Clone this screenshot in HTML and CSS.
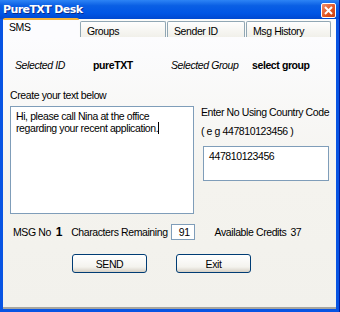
FILE: index.html
```html
<!DOCTYPE html>
<html lang="en">
<head>
  <meta charset="UTF-8">
  <title>PureTXT Desk</title>
  <link rel="stylesheet" href="styles.css">
</head>
<body>
  <div class="window">
    <div class="titlebar">
      <span class="title">PureTXT Desk</span>
      <span class="close-btn">
        <svg width="9" height="9" viewBox="0 0 9 9">
          <path d="M1 1 L8 8 M8 1 L1 8" stroke="#fff" stroke-width="2"/>
        </svg>
      </span>
    </div>
    <div class="client">
      <div class="tabs">
        <div class="tab active">SMS</div>
        <div class="tab">Groups</div>
        <div class="tab">Sender ID</div>
        <div class="tab">Msg History</div>
      </div>
      <div class="panel">
        <div class="selected-row">
          <span class="label-it id-label">Selected ID</span>
          <span class="bold id-value">pureTXT</span>
          <span class="label-it group-label">Selected Group</span>
          <span class="bold">select group</span>
        </div>
        <div class="create-label">Create your text below</div>
        <div class="compose">
          <div class="message-box">Hi, please call Nina at the office regarding your recent application.<span class="caret"></span></div>
          <div class="number-side">
            <div class="hint">Enter No Using Country Code</div>
            <div class="hint eg">( e g 447810123456 )</div>
            <div class="number-box">447810123456</div>
          </div>
        </div>
        <div class="stats-row">
          <span>MSG No</span>
          <span class="bold msg-no">1</span>
          <span class="chars">Characters Remaining</span>
          <span class="remain-box">91</span>
          <span class="credits">Available Credits</span>
          <span>37</span>
        </div>
        <div class="buttons">
          <button class="btn">SEND</button>
          <button class="btn">Exit</button>
        </div>
      </div>
    </div>
  </div>
</body>
</html>
```

FILE: styles.css
```css
body {
  margin: 0;
  padding: 0;
  font-family: 'Liberation Sans', Arial, sans-serif;
  font-size: 10.5px;
  letter-spacing: -0.4px;
  color: #000;
}

.window {
  width: 340px;
  height: 312px;
  box-sizing: border-box;
  display: flex;
  flex-direction: column;
  background: #0854e3;
  border-right: 1px solid #001ea0;
}

.titlebar {
  height: 19px;
  display: flex;
  align-items: center;
  justify-content: space-between;
  padding: 0 3px 0 3px;
  background: linear-gradient(#2d84f5, #0a5fe4 30%, #0055e5 70%, #0048d0);
}

.title {
  color: #fff;
  font-family: 'DejaVu Sans', sans-serif;
  font-weight: bold;
  font-size: 11px;
  letter-spacing: -0.6px;
  text-shadow: 1px 1px 0 #0a2b8c;
}

.close-btn {
  width: 13px;
  height: 13px;
  margin-top: 2px;
  border: 1px solid #fff;
  border-radius: 2px;
  background: linear-gradient(135deg, #f08f6e, #e0531f 60%, #c8400f);
  display: flex;
  align-items: center;
  justify-content: center;
}

.client {
  flex: 1;
  margin: 0 3px 3px 3px;
  display: flex;
  flex-direction: column;
  background: #fafaf8;
}

.tabs {
  display: flex;
  align-items: flex-end;
  height: 18px;
  background: #fbfbfa;
}

.tab {
  height: 16px;
  box-sizing: border-box;
  padding: 3px 0 0 6px;
  border: 1px solid #91a7b4;
  border-bottom: none;
  border-radius: 2px 2px 0 0;
  background: linear-gradient(#fefefe, #f1f0ea);
  margin-right: 1px;
}

.tab:nth-child(2) { width: 86px; }
.tab:nth-child(3) { width: 78px; }
.tab:nth-child(4) { width: 85px; }

.tab.active {
  width: 76px;
  height: 19px;
  padding: 1px 0 0 6px;
  background: #fcfcfe;
  border: none;
  border-top: 2px solid #f4b33c;
}

.panel {
  flex: 1;
  background: linear-gradient(#fcfcfe, #f4f3ee 55%, #f2f1ec);
  border-bottom: 2px solid #a7a6a0;
}

.selected-row {
  display: flex;
  align-items: baseline;
  padding: 22px 0 0 12px;
  height: 14px;
}

.label-it {
  font-style: italic;
}

.bold {
  font-weight: bold;
}

.id-label { width: 78px; }
.id-value { width: 78px; }
.group-label { width: 81px; }

.create-label {
  padding: 16px 0 0 7px;
  height: 13px;
}

.compose {
  display: flex;
  margin-top: 4px;
  padding-left: 7px;
}

.message-box {
  width: 184px;
  height: 108px;
  box-sizing: border-box;
  border: 1px solid #7f9db9;
  background: #fff;
  padding: 3px 5px;
  line-height: 12px;
}

.caret {
  display: inline-block;
  width: 1px;
  height: 12px;
  background: #000;
  vertical-align: top;
}

.number-side {
  padding-left: 7px;
}

.hint {
  height: 19px;
}

.eg {
  height: 21px;
}

.number-box {
  width: 126px;
  height: 35px;
  box-sizing: border-box;
  margin-left: 2px;
  border: 1px solid #7f9db9;
  background: #fff;
  padding: 3px 5px;
}

.stats-row {
  display: flex;
  align-items: center;
  padding: 10px 0 0 10px;
  height: 16px;
}

.msg-no {
  margin-left: 5px;
  font-size: 12px;
}

.chars {
  margin-left: 9px;
}

.remain-box {
  width: 24px;
  height: 16px;
  box-sizing: border-box;
  margin-left: 3px;
  border: 1px solid #7f9db9;
  background: #fff;
  text-align: right;
  padding: 1px 4px 0 0;
}

.credits {
  margin-left: 20px;
  margin-right: 4px;
}

.buttons {
  display: flex;
  gap: 29px;
  padding: 14px 0 0 69px;
}

.btn {
  width: 75px;
  height: 19px;
  border: 1px solid #003c74;
  border-radius: 3px;
  background: linear-gradient(#ffffff, #f4f3ee 70%, #d6d0c5);
  font-family: 'Liberation Sans', Arial, sans-serif;
  font-size: 10.5px;
  letter-spacing: -0.4px;
  padding: 0;
  color: #000;
}
```
